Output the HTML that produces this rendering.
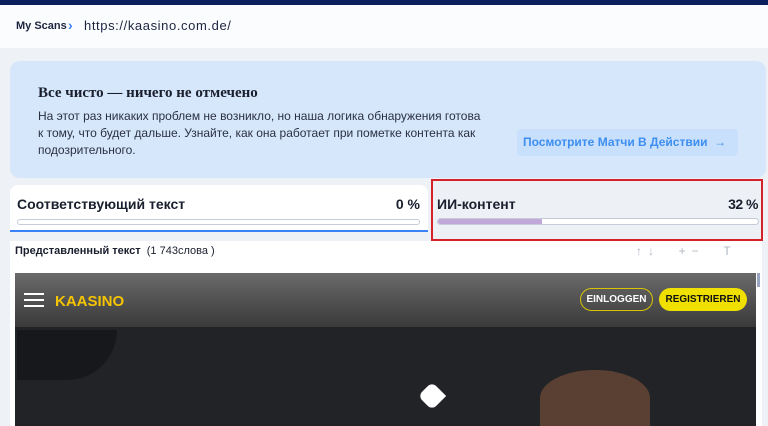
<!DOCTYPE html>
<html><head><meta charset="utf-8"><style>
*{margin:0;padding:0;box-sizing:border-box}
body{width:768px;height:426px;overflow:hidden;background:#eef1f5;font-family:"Liberation Sans",sans-serif;position:relative}
.a{position:absolute}
</style></head><body>
<div class="a" style="left:0;top:0;width:768px;height:5px;background:#0b1f5c"></div>
<div class="a" style="left:0;top:5px;width:768px;height:43px;background:#fbfcfd"></div>
<div class="a" style="left:16px;top:20px;font-size:11px;color:#1c2540;font-weight:bold">My Scans</div>
<div class="a" style="left:68px;top:17px;font-size:14px;color:#3b82f6;font-weight:bold">›</div>
<div class="a" style="left:84px;top:18px;font-size:13px;color:#1c2540;letter-spacing:.6px">https://kaasino.com.de/</div>
<div class="a" style="left:10px;top:61px;width:756px;height:117px;background:#d6e7fb;border-radius:10px"></div>
<div class="a" style="left:38px;top:85px;font-family:'Liberation Serif',serif;font-weight:bold;font-size:15px;color:#1a1f2e">Все чисто — ничего не отмечено</div>
<div class="a" style="left:38px;top:108px;width:480px;font-size:12px;line-height:17px;color:#2a3042;white-space:nowrap">На этот раз никаких проблем не возникло, но наша логика обнаружения готова<br>к тому, что будет дальше. Узнайте, как она работает при пометке контента как<br>подозрительного.</div>
<div class="a" style="left:517px;top:129px;width:221px;height:27px;background:#c8e0fb;border-radius:4px;color:#3d8ef0;font-size:12px;font-weight:bold;line-height:27px;padding-left:6px">Посмотрите Матчи В Действии &nbsp;→</div>
<div class="a" style="left:10px;top:185px;width:418px;height:47px;background:#fff;border-radius:8px 8px 0 0;border-bottom:2px solid #3b82f6"></div>
<div class="a" style="left:17px;top:196px;font-size:14px;font-weight:bold;color:#1a1f2e">Соответствующий текст</div>
<div class="a" style="left:380px;top:196px;width:40px;text-align:right;font-size:14px;font-weight:bold;color:#1a1f2e">0 %</div>
<div class="a" style="left:17px;top:219px;width:403px;height:6px;border:1px solid #c5cbd8;border-radius:4px;background:#fff"></div>
<div class="a" style="left:431px;top:179px;width:332px;height:62px;border:2px solid #d4222a;background:#edf1f5"></div>
<div class="a" style="left:437px;top:196px;font-size:14px;font-weight:bold;color:#1a1f2e">ИИ-контент</div>
<div class="a" style="left:700px;top:196px;width:58px;text-align:right;font-size:14px;font-weight:bold;color:#1a1f2e;letter-spacing:-.5px">32 %</div>
<div class="a" style="left:437px;top:218px;width:322px;height:7px;border:1px solid #c5cbd8;border-radius:4px;background:#fff;overflow:hidden"><div style="width:104px;height:100%;background:#c0a8d8"></div></div>
<div class="a" style="left:10px;top:241px;width:752px;height:185px;background:#fff"></div>
<div class="a" style="left:15px;top:245px;font-size:11px;color:#1a1f2e"><b>Представленный текст</b> &nbsp;(1 743слова )</div>
<div class="a" style="left:636px;top:244px;font-size:12px;color:#b0b6c2;letter-spacing:6px">↑↓ &nbsp;+− &nbsp;T</div>
<div class="a" style="left:15px;top:273px;width:741px;height:153px;background:#222327"></div>
<div class="a" style="left:15px;top:273px;width:741px;height:54px;background:linear-gradient(#6a6a6a,#3a3a3a)"></div>
<div class="a" style="left:24px;top:293px;width:20px;height:2px;background:#fff;box-shadow:0 6px 0 #fff,0 12px 0 #fff"></div>
<div class="a" style="left:55px;top:293px;font-size:15px;font-weight:bold;color:#f5c400">KAASINO</div>
<div class="a" style="left:580px;top:288px;width:73px;height:23px;border:1px solid #d9c400;border-radius:12px;color:#fff;font-size:10px;font-weight:bold;text-align:center;line-height:21px">EINLOGGEN</div>
<div class="a" style="left:659px;top:288px;width:88px;height:23px;background:#f0e000;border-radius:12px;color:#111;font-size:10px;font-weight:bold;text-align:center;line-height:23px">REGISTRIEREN</div>
<div class="a" style="left:17px;top:330px;width:100px;height:50px;background:#17181b;border-radius:0 0 60px 0"></div>
<div class="a" style="left:540px;top:370px;width:110px;height:56px;background:#5a4032;border-radius:50% 50% 0 0"></div>
<div class="a" style="left:422px;top:386px;width:20px;height:20px;background:#fff;transform:rotate(45deg);border-radius:6px 0 6px 6px"></div>
<div class="a" style="left:757px;top:273px;width:3px;height:14px;background:#9aa6c0"></div>
</body></html>
